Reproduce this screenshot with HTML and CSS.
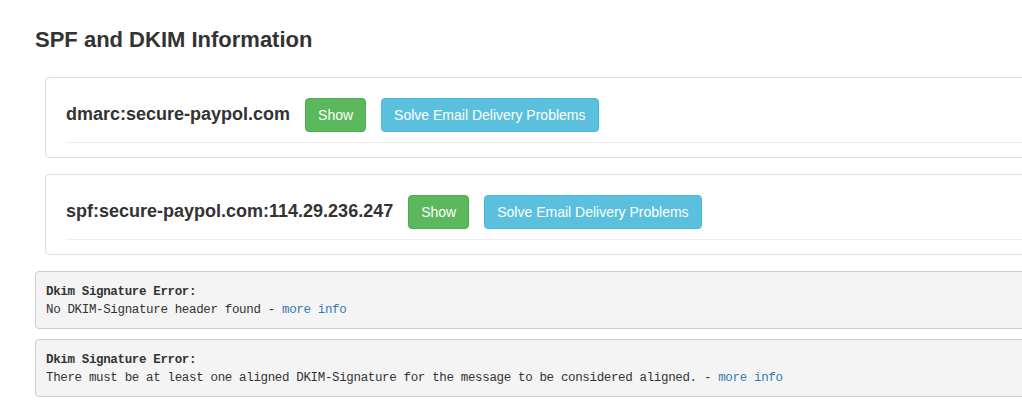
FILE: index.html
```html
<!DOCTYPE html>
<html>
<head>
<meta charset="utf-8">
<link rel="stylesheet" href="styles.css">
</head>
<body>
<div class="page">
  <h3 class="title">SPF and DKIM Information</h3>
  <div class="panel">
    <div class="row">
      <h4 class="record">dmarc:secure-paypol.com</h4>
      <button class="btn btn-green">Show</button>
      <button class="btn btn-blue">Solve Email Delivery Problems</button>
    </div>
    <div class="rule"></div>
  </div>
  <div class="panel">
    <div class="row">
      <h4 class="record">spf:secure-paypol.com:114.29.236.247</h4>
      <button class="btn btn-green">Show</button>
      <button class="btn btn-blue">Solve Email Delivery Problems</button>
    </div>
    <div class="rule"></div>
  </div>
  <pre class="err"><b>Dkim Signature Error:</b>
No DKIM-Signature header found - <a href="#">more info</a></pre>
  <pre class="err"><b>Dkim Signature Error:</b>
There must be at least one aligned DKIM-Signature for the message to be considered aligned. - <a href="#">more info</a></pre>
</div>
</body>
</html>
```

FILE: styles.css
```css
html, body {
  margin: 0;
  padding: 0;
  overflow: hidden;
  background: #fff;
}
body {
  font-family: "Liberation Sans", Arial, sans-serif;
  font-size: 14px;
  line-height: 1.42857;
  color: #333;
}
.page {
  width: 1100px;
  padding: 28px 0 0 35px;
}
.title {
  margin: 0 0 25px 0;
  font-size: 22px;
  line-height: 24px;
  font-weight: 700;
  color: #333;
}
.panel {
  margin: 0 0 16px 10px;
  border: 1px solid #ddd;
  border-radius: 4px;
  padding: 20px 0 14px 20px;
}
.row {
  display: flex;
  align-items: center;
  height: 34px;
}
.record {
  margin: -2px 15px 0 0;
  font-size: 18px;
  font-weight: 700;
  line-height: 20px;
  color: #333;
}
.btn {
  font-family: "Liberation Sans", Arial, sans-serif;
  font-size: 14px;
  line-height: 20px;
  padding: 6px 12px;
  border: 1px solid transparent;
  border-radius: 4px;
  color: #fff;
  height: 34px;
  margin: 0 15px 0 0;
  cursor: pointer;
}
.btn-green {
  background: #5cb85c;
  border-color: #4cae4c;
}
.btn-blue {
  background: #5bc0de;
  border-color: #46b8da;
}
.rule {
  margin-top: 10px;
  border-top: 1px solid #eee;
}
.err {
  margin: 0 0 10px 0;
  padding: 10.5px 10px 8.5px 10px;
  background: #f4f4f4;
  border: 1px solid #ccc;
  border-radius: 4px;
  font-family: "Liberation Mono", "DejaVu Sans Mono", monospace;
  font-size: 12.5px;
  letter-spacing: -0.35px;
  line-height: 18.57px;
  color: #333;
  white-space: pre;
}
.err b {
  font-weight: 700;
}
.err a {
  color: #337ab7;
  text-decoration: none;
}
```
